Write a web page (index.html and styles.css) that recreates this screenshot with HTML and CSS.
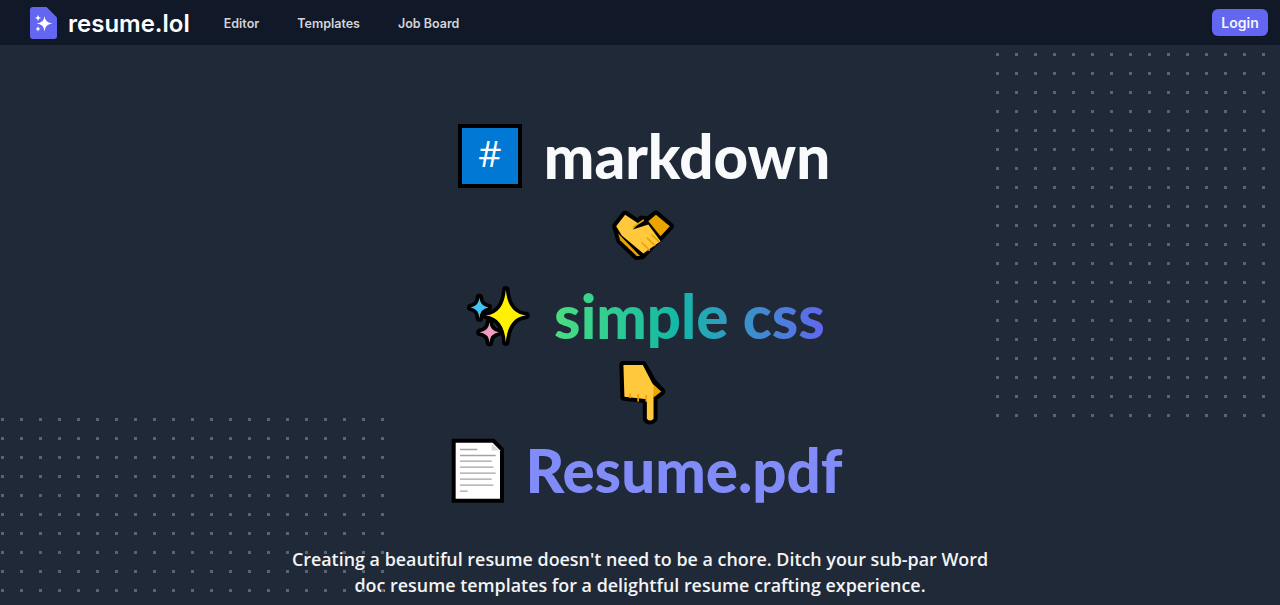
FILE: index.html
```html
<!DOCTYPE html>
<html lang="en">
<head>
<meta charset="utf-8">
<title>resume.lol</title>
<link rel="stylesheet" href="styles.css">
</head>
<body>
<header class="topbar">
  <a class="brand" href="#">
    <svg class="brand-icon" viewBox="0 0 27 32" aria-hidden="true">
      <path class="logo-doc" d="M3 0H16.5L27 10.5V29a3 3 0 0 1-3 3H3a3 3 0 0 1-3-3V3a3 3 0 0 1 3-3Z"/>
      <path class="logo-star" d="M14.5 9Q15 16 22.5 16.5Q15 17 14.5 24.5Q14 17 6.5 16.5Q14 16 14.500 9Z"/>
      <path class="logo-star" d="M8 7.500Q8.300 10.500 11.200 11Q8.300 11.300 8 14.300Q7.700 11.300 4.800 11Q7.700 10.500 8 7.500Z"/>
      <path class="logo-star" d="M8 19Q8.200 21.500 10.500 22Q8.200 22.300 8 24.800Q7.800 22.300 5.500 22Q7.800 21.500 8 19Z"/>
    </svg>
    <span class="brand-name">resume.lol</span>
  </a>
  <nav class="nav">
    <a href="#">Editor</a>
    <a href="#">Templates</a>
    <a href="#">Job Board</a>
  </nav>
  <a class="login" href="#">Login</a>
</header>

<main class="hero">
  <svg class="dots dots-right" aria-hidden="true"><defs><pattern id="dotR" width="19" height="19" patternUnits="userSpaceOnUse"><rect x="1" y="1" width="3" height="3"/></pattern></defs><rect width="100%" height="100%" fill="url(#dotR)"/></svg>
  <svg class="dots dots-left" aria-hidden="true"><defs><pattern id="dotL" width="19" height="19" patternUnits="userSpaceOnUse"><rect x="1" y="1" width="3" height="3"/></pattern></defs><rect width="100%" height="100%" fill="url(#dotL)"/></svg>

  <div class="row row-markdown">
    <span class="hash">#</span>
    <h1 class="word word-white">markdown</h1>
  </div>

  <div class="row row-hands">
    <svg class="emoji-hands" viewBox="510 295 198 160" aria-hidden="true">
      <path class="outline" d="M528 350L555 315L595 342L605 330L625 332L648 315L690 350L660 382L605 438L590 440L540 392Z"/>
      <path class="hand-dark" d="M648 315L690 350L662 380L625 335Z"/>
      <path class="hand-dark" d="M534 372L600 440L590 440L540 392Z"/>
      <path class="hand" d="M528 350L555 315L595 342L578 360L625 345L662 395L610 432L545 378Z"/>
      <path class="crease" d="M580 352L610 332M628 422L606 400M644 408L622 386M656 396L636 376"/>
    </svg>
  </div>

  <div class="row row-simple">
    <svg class="emoji-sparkles" viewBox="80 35 200 200" aria-hidden="true">
      <path class="star star-yellow" d="M202 55Q208 126 262 132Q208 138 202 212Q196 138 142 132Q196 126 202 55Z"/>
      <path class="star star-blue" d="M123 78Q125 104 150 108Q125 112 123 140Q121 112 97 108Q121 104 123 78Z"/>
      <path class="star star-pink" d="M153 152Q155 178 181 182Q155 186 153 213Q151 186 124 182Q151 178 153 152Z"/>
    </svg>
    <h2 class="word word-gradient">simple css</h2>
  </div>

  <div class="row row-point">
    <svg class="emoji-point" viewBox="530 265 155 200" aria-hidden="true">
      <path class="outline" d="M552 283H610L640 335L665 362L642 380V443Q631 454 622 443V385L555 378Z"/>
      <path class="hand-dark" d="M635 335L665 362L642 380Z"/>
      <path class="hand" d="M552 283H610L642 345V443Q631 454 622 443V385L555 378Z"/>
      <path class="crease" d="M572 370V380M596 372V390M620 374V390"/>
    </svg>
  </div>

  <div class="row row-resume">
    <svg class="emoji-doc" viewBox="50 35 165 200" aria-hidden="true">
      <path class="doc-sheet" d="M67 52H178L200 74V220H67Z"/>
      <path class="doc-fold" d="M175 55L198 75H175Z"/>
      <path class="doc-lines" d="M80 72H132M80 90H187M80 107H175M80 125H180M80 143H187M80 161H175M80 179H180M80 197H103"/>
    </svg>
    <h2 class="word word-indigo">Resume.pdf</h2>
  </div>

  <p class="lead">Creating a beautiful resume doesn't need to be a chore. Ditch your sub-par Word doc resume templates for a delightful resume crafting experience.</p>
</main>
</body>
</html>
```
FILE: styles.css
```css
* { box-sizing: border-box; }
html, body { margin: 0; padding: 0; }
body {
  background: #1f2937;
  color: #f9fafb;
  font-family: "Inter", "Liberation Sans", sans-serif;
}
a { text-decoration: none; color: inherit; }

.topbar {
  height: 45px;
  background: #111827;
  display: flex;
  align-items: center;
  padding: 0 12px 0 30px;
}
.brand { display: flex; align-items: center; gap: 11px; }
.brand-icon { width: 27px; height: 32px; display: block; margin-top: 1px; }
.logo-doc { fill: #6366f1; }
.logo-star { fill: #fff; }
.brand-name { font-size: 24px; font-weight: 600; color: #fff; line-height: 1; padding-top: 2px; }
.nav {
  display: flex;
  gap: 38px;
  margin-left: 34px;
  padding-top: 1px;
  font-size: 12.500px;
  font-weight: 600;
  color: #d1d5db;
}
.login {
  margin-left: auto;
  width: 56px;
  height: 27px;
  border-radius: 6px;
  background: #6366f1;
  color: #f3f4ff;
  font-size: 14px;
  font-weight: 600;
  display: flex;
  align-items: center;
  justify-content: center;
}

.hero {
  position: relative;
  min-height: 560px;
  display: flex;
  flex-direction: column;
  align-items: center;
  padding-top: 79px;
}
.dots { position: absolute; fill: #5b6472; }
.dots-right { left: 995px; top: 7px; width: 285px; height: 380px; }
.dots-left { left: 0; top: 372px; width: 384px; height: 190px; }

.row {
  position: relative;
  display: flex;
  align-items: center;
  justify-content: center;
  gap: 22px;
  height: 64px;
  margin-left: 8px;
}
.row-hands { margin-top: 20px; height: 53px; margin-left: 6px; }
.row-simple { margin-top: 23px; margin-left: 10px; }
.row-point { margin-top: 12px; margin-left: 4px; }
.row-resume { margin-top: 14px; gap: 21px; margin-left: 12px; }

.hash {
  width: 64px;
  height: 64px;
  border: 4px solid #000;
  background: #0078d4;
  color: #fff;
  font-family: "Open Sans", sans-serif;
  font-size: 36px;
  font-weight: 500;
  display: flex;
  align-items: center;
  justify-content: center;
  padding-bottom: 6px;
}
.word {
  margin: 0;
  font-family: "Lato", "Open Sans", sans-serif;
  font-size: 60px;
  font-weight: 900;
  line-height: 64px;
}
.word-white { color: #f9fafb; }
.word-gradient {
  background: linear-gradient(90deg, #4ade80, #14b8a6 45%, #6366f1);
  -webkit-background-clip: text;
  background-clip: text;
  color: transparent;
}
.word-indigo { color: #818cf8; }

.outline { fill: #000; stroke: #000; stroke-width: 24; stroke-linejoin: round; }
.hand { fill: #ffc83d; }
.hand-dark { fill: #eaa300; }
.crease { fill: none; stroke: #eaa300; stroke-width: 5; stroke-linecap: round; }
.emoji-hands { width: 66px; height: 53px; display: block; }
.emoji-sparkles { width: 67px; height: 67px; display: block; }
.emoji-point { width: 52px; height: 67px; display: block; }
.emoji-doc { width: 55px; height: 67px; display: block; }
.star { stroke: #000; stroke-width: 22; stroke-linejoin: round; paint-order: stroke; }
.star-yellow { fill: #fff100; }
.star-blue { fill: #3fc6f5; }
.star-pink { fill: #f49ac1; }
.doc-sheet { fill: #fff; stroke: #000; stroke-width: 24; stroke-linejoin: miter; paint-order: stroke; }
.doc-fold { fill: #d9d9d9; }
.doc-lines { fill: none; stroke: #a3a3a3; stroke-width: 4; }

.lead {
  margin: 44px 0 0;
  width: 712px;
  text-align: center;
  font-family: "Open Sans", sans-serif;
  font-size: 17.900px;
  font-weight: 600;
  line-height: 26px;
  color: #f3f4f6;
}
```
